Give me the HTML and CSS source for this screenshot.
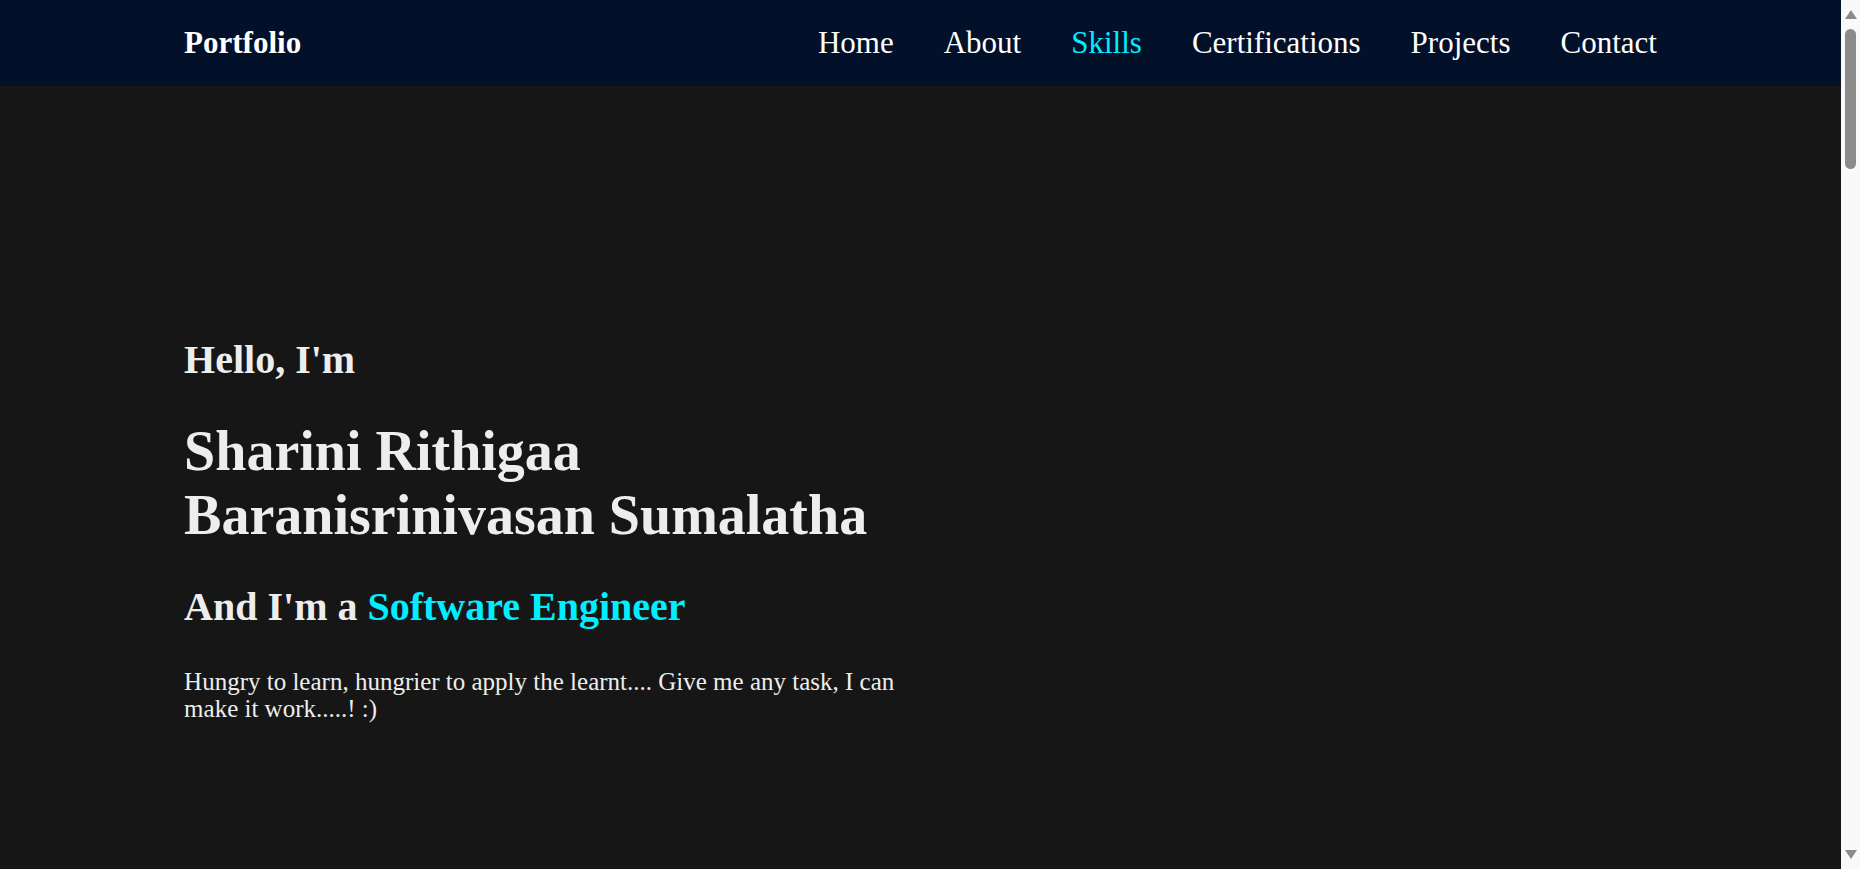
FILE: index.html
```html
<!DOCTYPE html>
<html lang="en">
<head>
<meta charset="UTF-8">
<title>Portfolio</title>
<link rel="stylesheet" href="styles.css">
</head>
<body>
<div class="page">
  <header class="header">
    <a class="logo" href="#home">Portfolio</a>
    <nav class="navbar">
      <a href="#home">Home</a>
      <a href="#about">About</a>
      <a href="#skills" class="active">Skills</a>
      <a href="#certifications">Certifications</a>
      <a href="#projects">Projects</a>
      <a href="#contact">Contact</a>
    </nav>
  </header>

  <section class="home" id="home">
    <div class="home-content">
      <h3 class="greeting">Hello, I'm</h3>
      <h1 class="name">Sharini Rithigaa Baranisrinivasan Sumalatha</h1>
      <h3 class="role">And I'm a <span class="accent">Software Engineer</span></h3>
      <p class="tagline">Hungry to learn, hungrier to apply the learnt.... Give me any task, I can make it work.....! :)</p>
    </div>
  </section>
</div>

<div class="scrollbar" aria-hidden="true">
  <svg class="scroll-arrow up" width="12" height="9" viewBox="0 0 12 9"><polygon points="0,9 12,9 6,0" fill="#8b8b8b"/></svg>
  <div class="scroll-thumb"></div>
  <div class="scroll-space"></div>
  <svg class="scroll-arrow down" width="12" height="9" viewBox="0 0 12 9"><polygon points="0,0 12,0 6,9" fill="#8b8b8b"/></svg>
</div>
</body>
</html>
```
FILE: styles.css
```css
html {
  background: #161616;
}

body {
  margin: 0;
  background: #161616;
  color: #ededed;
  font-family: "Liberation Serif", "Times New Roman", serif;
}

.page {
  margin-right: 19px;
}

.header {
  display: flex;
  align-items: center;
  justify-content: space-between;
  height: 86px;
  padding: 0 10%;
  background: #03102a;
}

.logo {
  color: #ffffff;
  font-size: 31px;
  font-weight: 700;
  text-decoration: none;
}

.navbar {
  display: flex;
  gap: 50px;
}

.navbar a {
  color: #ffffff;
  font-size: 31px;
  text-decoration: none;
}

.navbar a.active {
  color: #00eeff;
}

.home {
  display: flex;
  align-items: center;
  min-height: 100vh;
  padding: 0 10%;
}

.home-content {
  width: 50%;
}

.greeting {
  margin: 40px 0 36px;
  font-size: 40px;
  font-weight: 700;
}

.name {
  margin: 0 0 36px;
  font-size: 56px;
  font-weight: 700;
}

.role {
  margin: 0 0 38px;
  font-size: 40px;
  font-weight: 700;
}

.accent {
  color: #00eeff;
}

.tagline {
  margin: 0 0 24px;
  font-size: 25px;
  line-height: 27px;
}

.scrollbar {
  position: fixed;
  top: 0;
  right: 0;
  width: 19px;
  height: 100vh;
  display: flex;
  flex-direction: column;
  align-items: center;
  background: #f9f9f9;
}

.scroll-arrow {
  display: block;
  flex: none;
}

.scroll-arrow.up {
  margin-top: 10px;
}

.scroll-arrow.down {
  margin-bottom: 10px;
}

.scroll-thumb {
  flex: none;
  width: 11px;
  height: 140px;
  margin-top: 10px;
  border-radius: 6px;
  background: #8b8b8b;
}

.scroll-space {
  flex: 1;
}
```
